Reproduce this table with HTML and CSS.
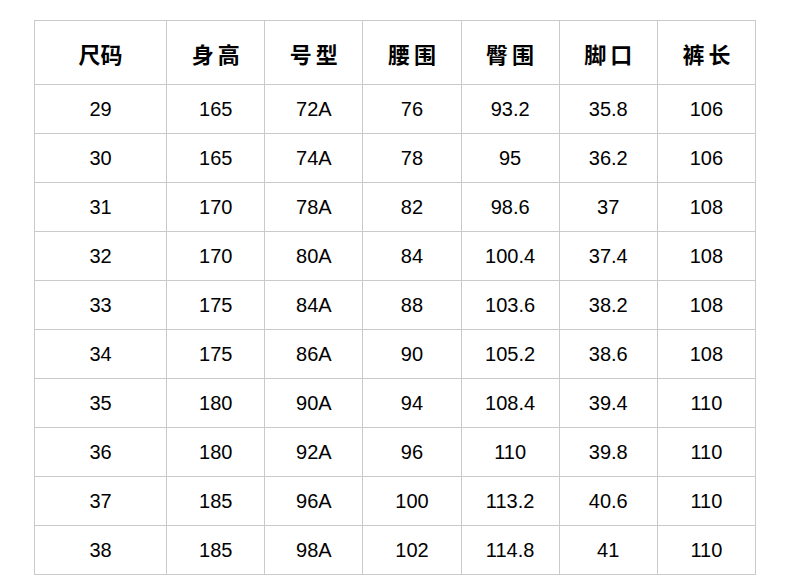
FILE: index.html
```html
<!DOCTYPE html>
<html lang="zh">
<head>
<meta charset="utf-8">
<link rel="stylesheet" href="styles.css">
</head>
<body>
<table class="size-table">
  <colgroup>
    <col class="c-first">
    <col class="c"><col class="c"><col class="c"><col class="c"><col class="c"><col class="c">
  </colgroup>
  <thead>
    <tr>
      <th>尺码</th><th class="sp">身高</th><th class="sp">号型</th><th class="sp">腰围</th><th class="sp">臀围</th><th class="sp">脚口</th><th class="sp">裤长</th>
    </tr>
  </thead>
  <tbody>
    <tr><td>29</td><td>165</td><td>72A</td><td>76</td><td>93.2</td><td>35.8</td><td>106</td></tr>
    <tr><td>30</td><td>165</td><td>74A</td><td>78</td><td>95</td><td>36.2</td><td>106</td></tr>
    <tr><td>31</td><td>170</td><td>78A</td><td>82</td><td>98.6</td><td>37</td><td>108</td></tr>
    <tr><td>32</td><td>170</td><td>80A</td><td>84</td><td>100.4</td><td>37.4</td><td>108</td></tr>
    <tr><td>33</td><td>175</td><td>84A</td><td>88</td><td>103.6</td><td>38.2</td><td>108</td></tr>
    <tr><td>34</td><td>175</td><td>86A</td><td>90</td><td>105.2</td><td>38.6</td><td>108</td></tr>
    <tr><td>35</td><td>180</td><td>90A</td><td>94</td><td>108.4</td><td>39.4</td><td>110</td></tr>
    <tr><td>36</td><td>180</td><td>92A</td><td>96</td><td>110</td><td>39.8</td><td>110</td></tr>
    <tr><td>37</td><td>185</td><td>96A</td><td>100</td><td>113.2</td><td>40.6</td><td>110</td></tr>
    <tr><td>38</td><td>185</td><td>98A</td><td>102</td><td>114.8</td><td>41</td><td>110</td></tr>
  </tbody>
</table>
</body>
</html>
```
FILE: styles.css
```css
html, body {
  margin: 0;
  padding: 0;
  background: #fff;
}
body {
  padding: 20px 0 0 34px;
  font-family: "Liberation Sans", "Noto Sans CJK SC", sans-serif;
  color: #000;
}
.size-table {
  border-collapse: collapse;
  table-layout: fixed;
  width: 722px;
}
.c-first { width: 132px; }
.c { width: 98px; }
.size-table th,
.size-table td {
  border: 1px solid #cacaca;
  text-align: center;
  padding: 0;
}
.size-table th {
  height: 64px;
  font-family: "Noto Sans CJK SC", sans-serif;
  font-weight: bold;
  font-size: 22px;
  padding-top: 1px;
  box-sizing: border-box;
}
.size-table th.sp {
  letter-spacing: 4px;
  text-indent: 4px;
}
.size-table td {
  height: 49px;
  font-size: 20px;
  box-sizing: border-box;
}
```
